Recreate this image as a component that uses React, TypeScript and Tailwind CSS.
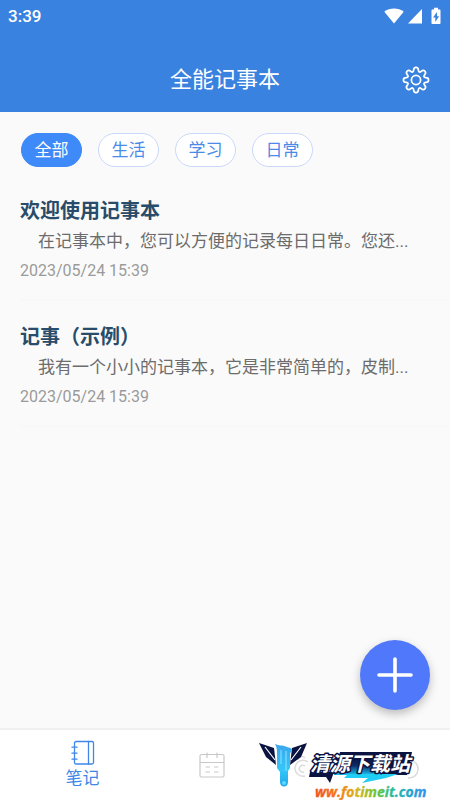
interface Note {
  title: string
  content: string
  date: string
}

const tags = ["全部", "生活", "学习", "日常"]

const notes: Note[] = [
  {
    title: "欢迎使用记事本",
    content: "在记事本中，您可以方便的记录每日日常。您还...",
    date: "2023/05/24 15:39",
  },
  {
    title: "记事（示例）",
    content: "我有一个小小的记事本，它是非常简单的，皮制...",
    date: "2023/05/24 15:39",
  },
]

const StatusBar = () => (
  <div className="flex h-8 items-center justify-between px-2 text-white">
    <span className="text-[17px] font-medium leading-none">3:39</span>
    <div className="flex items-center">
      <svg width="20" height="16" viewBox="0 0 20 16" fill="currentColor">
        <path d="M.3 3.8C5.8-.5 14.2-.5 19.7 3.8L10 15.5Z" />
      </svg>
      <svg className="ml-1" width="14" height="16" viewBox="0 0 14 16" fill="currentColor">
        <path d="M14 1v14.5H0Z" />
      </svg>
      <svg className="ml-2" width="12" height="18" viewBox="0 0 12 18">
        <path
          fill="currentColor"
          d="M4 .8h4v1.7h1.5c.6 0 1 .4 1 1V16c0 .6-.4 1-1 1h-7c-.6 0-1-.4-1-1V3.5c0-.6.4-1 1-1H4Z"
        />
        <path fill="#3a82e0" d="M7 5 3 10.5h2.300V15l3.800-5.700H7Z" />
      </svg>
    </div>
  </div>
)

const GearIcon = () => (
  <svg width="28" height="28" viewBox="0 0 28 28" fill="none" stroke="currentColor" strokeWidth="1.7" strokeLinejoin="round">
    <path d="M11.6 4.2C11.7 .5 16.3 .5 16.4 4.2C16.6 6.2 17.8 6.7 19.2 5.4C21.9 2.9 25.1 6.1 22.6 8.8C21.3 10.2 21.8 11.4 23.8 11.6C27.5 11.7 27.5 16.3 23.8 16.4C21.8 16.6 21.3 17.8 22.6 19.2C25.1 21.9 21.9 25.1 19.2 22.6C17.8 21.3 16.6 21.8 16.4 23.8C16.3 27.5 11.7 27.5 11.6 23.8C11.4 21.8 10.2 21.3 8.8 22.6C6.1 25.1 2.9 21.9 5.4 19.2C6.7 17.8 6.2 16.6 4.2 16.4C.5 16.3 .5 11.7 4.2 11.6C6.2 11.4 6.7 10.2 5.4 8.8C2.9 6.1 6.1 2.9 8.8 5.4C10.2 6.7 11.4 6.2 11.6 4.2Z" />
    <circle cx="14" cy="14" r="4.6" />
  </svg>
)

const NotebookIcon = () => (
  <svg width="24" height="26" viewBox="0 0 24 26" fill="none" stroke="currentColor" strokeWidth="1.3" strokeLinecap="round">
    <rect x="3.5" y="1.5" width="19" height="22.5" rx="1.5" />
    <path d="M17.5 1.5V24M1 7.2h5M1 13.2h5M1 19.2h5" />
  </svg>
)

const CalendarIcon = () => (
  <svg width="26" height="26" viewBox="0 0 26 26" fill="none" stroke="currentColor" strokeWidth="1.2" strokeLinecap="round">
    <rect x="1" y="2.5" width="24" height="22.5" rx="1.5" />
    <path d="M1 10.5h24M8 1v4.500M18 1v4.500M7 15h3.500M15.500 15H19M7 20h3.500M15.500 20H19" />
  </svg>
)

const SiteLogo = () => (
  <svg
    className="pointer-events-none absolute bottom-0 right-4"
    width="176"
    height="64"
    viewBox="0 0 176 64"
    aria-label="清源下载站"
  >
    <defs>
      <linearGradient id="drip" x1="0" y1="0" x2="0" y2="1">
        <stop offset="0" stopColor="#3aa6ec" />
        <stop offset=".6" stopColor="#35c6fa" />
        <stop offset="1" stopColor="#1fa8ea" />
      </linearGradient>
      <linearGradient id="banner" x1="0" y1="0" x2="0" y2="1">
        <stop offset="0" stopColor="#0b1442" />
        <stop offset=".45" stopColor="#0e2b66" />
        <stop offset="1" stopColor="#18c4f5" />
      </linearGradient>
      <linearGradient id="site" x1="0" y1="0" x2="1" y2="0">
        <stop offset="0" stopColor="#f0501e" />
        <stop offset=".2" stopColor="#f47a1c" />
        <stop offset=".38" stopColor="#d8b420" />
        <stop offset=".55" stopColor="#6cc435" />
        <stop offset=".72" stopColor="#22b8a8" />
        <stop offset="1" stopColor="#2f8ff0" />
      </linearGradient>
    </defs>
    <g fill="none" stroke="#dcdcdc" strokeWidth="1.5">
      <path d="M47 40a8 8 0 1 1 3-14M46 36a3.5 3.5 0 1 1 1-6M40 24a4 4 0 0 1 7-2" />
      <path d="M152 24a9 9 0 1 1-2 18" />
    </g>
    <path fill="#0b1440" d="M1 7 16 12 18 29 8 21Z" />
    <path fill="#0b1440" d="M49 7 34 12 32 29 43 21Z" />
    <path stroke="#fff" strokeWidth="1.2" fill="none" d="M7 11 17 24M43 11 33 24" />
    <path
      fill="url(#drip)"
      d="M17 8c4 2 7 1 9 2c2 1 5 1 8 3l-2 5v14l-2 3v11c0 6-8 6-8 0V36l-3-4V20c0-6 0-9-2-12Z"
    />
    <path stroke="#8fe2ff" strokeWidth="1" fill="none" d="M23 14v14M28 15v20" />
    <circle cx="26" cy="47" r="2" fill="#5fd8ff" />
    <path fill="#0b1440" d="M52 36h24l-4 11-4-6H51Z" />
    <path fill="#0b1440" d="M82 16h72l-5 23H76Z" />
    <path fill="url(#banner)" d="M84 22h42l-4 17H76Z" />
    <path fill="#20cdf5" d="M90 38h50l-12 4-24 5 6-5H86Z" />
    <text
      x="52"
      y="35"
      fontSize="20"
      fontWeight="700"
      fontStyle="italic"
      fontFamily="'Noto Sans CJK SC', sans-serif"
      fill="#fff"
      stroke="#0b1440"
      strokeWidth="3"
      strokeLinejoin="round"
      paintOrder="stroke"
    >
      清源下载站
    </text>
    <text
      x="57"
      y="61"
      fontSize="14"
      fontWeight="700"
      fontStyle="italic"
      fontFamily="'Open Sans', sans-serif"
      fill="url(#site)"
      stroke="url(#site)"
      strokeWidth=".3"
    >
      ww.fotimeit.com
    </text>
  </svg>
)

const App = () => {
  return (
    <div className="relative flex min-h-screen flex-col bg-[#fafafa] font-[Roboto,'Noto_Sans_CJK_SC',sans-serif]">
      <header className="bg-[#3a82e0] text-white">
        <StatusBar />
        <div className="grid h-20 grid-cols-[1fr_auto_1fr] items-center px-5 pt-4">
          <h1 className="col-start-2 text-[22px] leading-8">全能记事本</h1>
          <button className="justify-self-end" aria-label="设置">
            <GearIcon />
          </button>
        </div>
      </header>

      <main className="flex-1">
        <div className="flex gap-4 px-[21px] pt-[21px]">
          {tags.map((tag, index) => (
            <button
              key={tag}
              className={`flex h-[34px] w-[61px] items-center justify-center rounded-full border pt-0.5 text-[17px] ${
                index === 0 ? "border-[#3e8af8] bg-[#3e8af8] text-white" : "border-[#c9d8fb] bg-white text-[#4a8be8]"
              }`}
            >
              {tag}
            </button>
          ))}
        </div>

        <ul className="pl-5 pt-4">
          {notes.map((note) => (
            <li key={note.title} className="mb-2 border-b-2 border-[#f8f8f8] py-3.5 pr-5">
              <h2 className="text-xl font-bold leading-7 text-[#284c69]">{note.title}</h2>
              <p className="truncate indent-[18px] text-[17px] leading-8 text-[#6c6c6c]">{note.content}</p>
              <time className="block text-base leading-7 text-[#9a9a9a]">{note.date}</time>
            </li>
          ))}
        </ul>
      </main>

      <button
        aria-label="新建"
        className="absolute bottom-[90px] right-5 flex size-[70px] items-center justify-center rounded-full bg-[#5078fa] text-white shadow-[0_4px_10px_rgba(0,0,0,0.25)]"
      >
        <svg width="38" height="38" viewBox="0 0 38 38" stroke="currentColor" strokeWidth="3.6" strokeLinecap="round">
          <path d="M19 3v32M3 19h32" />
        </svg>
      </button>

      <nav className="relative flex h-[72px] items-center border-t-2 border-[#f0f0f0] bg-white pl-[18px] pr-[45px]">
        <a href="#notes" className="flex flex-1 flex-col items-center text-[17px] leading-6 text-[#3e86e8]">
          <NotebookIcon />
          笔记
        </a>
        <a href="#calendar" aria-label="日历" className="flex flex-1 justify-center text-[#c8c8c8]">
          <CalendarIcon />
        </a>
        <div className="flex-1" />
        <SiteLogo />
      </nav>
    </div>
  )
}

export default App
